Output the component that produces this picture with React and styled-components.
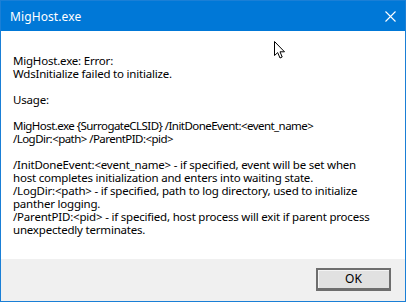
import React from "react";
import styled, { createGlobalStyle } from "styled-components";

const Global = createGlobalStyle`
  html, body { margin: 0; padding: 0; background: #ffffff; }
  body { width: 406px; height: 302px; overflow: hidden; }
`;

const Window = styled.div`
  position: relative;
  box-sizing: border-box;
  width: 406px;
  height: 302px;
  border: 1px solid #1a7fd6;
  display: flex;
  flex-direction: column;
  font-family: "Noto Sans", "Open Sans", sans-serif;
  background: #ffffff;
`;

const TitleBar = styled.div`
  height: 30px;
  flex: 0 0 30px;
  background: #0078d7;
  display: flex;
  align-items: center;
  justify-content: space-between;
  padding: 0 9px 0 9px;
  color: #ffffff;
`;

const Title = styled.div`
  font-size: 12px;
  letter-spacing: 0.1px;
  line-height: 16px;
  padding-top: 1px;
`;

const CloseButton = styled.div`
  width: 30px;
  height: 30px;
  display: flex;
  align-items: center;
  justify-content: flex-end;
`;

const Body = styled.div`
  flex: 1;
  background: #ffffff;
  padding: 23px 0 0 12px;
  display: flex;
  flex-direction: column;
  gap: 13px;
`;

const Paragraph = styled.div`
  font-size: 11.5px;
  line-height: 13px;
  color: #000000;
  white-space: pre;
  letter-spacing: ${(p) => (p.$tight ? "-0.55px" : "-0.2px")};
`;

const Footer = styled.div`
  flex: 0 0 42px;
  height: 42px;
  background: #f0f0f0;
  display: flex;
  align-items: flex-start;
  justify-content: flex-end;
  padding: 9px 14px 0 0;
  box-sizing: border-box;
`;

const Button = styled.button`
  box-sizing: border-box;
  width: 75px;
  height: 23px;
  background: #e1e1e1;
  border: 2px solid #6e6e6e;
  border-bottom-width: 3px;
  box-shadow: inset 0 1px 0 #f4f4f4, inset 1px 0 0 #f4f4f4;
  font-family: "Noto Sans", "Open Sans", sans-serif;
  font-size: 12px;
  color: #000000;
  padding: 0;
  line-height: 16px;
`;

const Cursor = styled.svg`
  position: absolute;
  left: 272px;
  top: 39px;
`;

const paragraphs = [
  { text: "MigHost.exe: Error:\nWdsInitialize failed to initialize." },
  { text: "Usage:" },
  {
    text: "MigHost.exe {SurrogateCLSID} /InitDoneEvent:<event_name>\n/LogDir:<path> /ParentPID:<pid>",
    tight: true,
  },
  {
    text:
      "/InitDoneEvent:<event_name> - if specified, event will be set when\n" +
      "host completes initialization and enters into waiting state.\n" +
      "/LogDir:<path> - if specified, path to log directory, used to initialize\n" +
      "panther logging.\n" +
      "/ParentPID:<pid> - if specified, host process will exit if parent process\n" +
      "unexpectedly terminates.",
  },
];

export default function App() {
  return (
    <>
      <Global />
      <Window>
        <TitleBar>
          <Title>MigHost.exe</Title>
          <CloseButton>
            <svg width="11" height="11" viewBox="0 0 11 11">
              <path d="M0.5 0.5 L10.5 10.5 M10.5 0.5 L0.5 10.5" stroke="#ffffff" strokeWidth="1.1" fill="none" />
            </svg>
          </CloseButton>
        </TitleBar>
        <Body>
          {paragraphs.map((p, i) => (
            <Paragraph key={i} $tight={p.tight}>
              {p.text}
            </Paragraph>
          ))}
        </Body>
        <Footer>
          <Button>OK</Button>
        </Footer>
        <Cursor width="13" height="20" viewBox="0 0 13 20">
          <path
            d="M1.5 1.5 L1.5 15.5 L4.7 12.6 L7 18 L9.2 17 L7 11.8 L11.5 11.8 Z"
            fill="#ffffff"
            stroke="#000000"
            strokeWidth="1"
            strokeLinejoin="miter"
          />
        </Cursor>
      </Window>
    </>
  );
}
